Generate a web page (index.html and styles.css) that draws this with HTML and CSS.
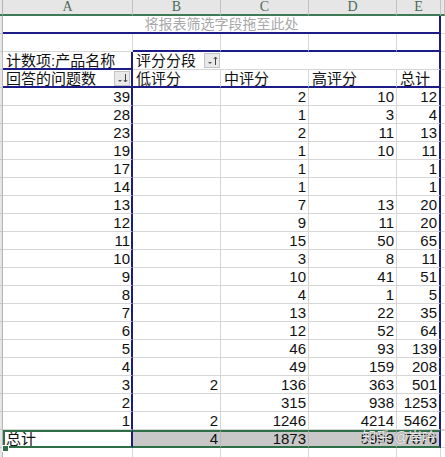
FILE: index.html
```html
<!DOCTYPE html>
<html lang="zh-CN">
<head>
<meta charset="utf-8">
<title>数据透视表</title>
<link rel="stylesheet" href="styles.css">
</head>
<body>
<div class="sheet">
  <div class="row hdr">
    <div class="stub hstub"></div>
    <div class="cell hcell ca">A</div>
    <div class="cell hcell cb">B</div>
    <div class="cell hcell cc">C</div>
    <div class="cell hcell cd">D</div>
    <div class="cell hcell ce">E</div>
    <div class="cell hcell cf"></div>
  </div>

  <div class="row">
    <div class="stub"></div>
    <div class="cell span5 bb br drop">将报表筛选字段拖至此处</div>
    <div class="cell cf"></div>
  </div>

  <div class="row">
    <div class="stub"></div>
    <div class="cell ca"></div>
    <div class="cell cb bb"></div>
    <div class="cell cc bb"></div>
    <div class="cell cd bb"></div>
    <div class="cell ce bb br"></div>
    <div class="cell cf"></div>
  </div>

  <div class="row">
    <div class="stub"></div>
    <div class="cell ca bb br">计数项:产品名称</div>
    <div class="cell cb noright field">
      <span>评分分段</span>
      <span class="pbtn"><svg width="13" height="13" viewBox="0 0 13 13"><path d="M2 8h4l-2 2z" fill="#555"/><path d="M9.5 3v8M7.8 5l1.7-2 1.7 2" stroke="#444" stroke-width="1" fill="none"/></svg></span>
    </div>
    <div class="cell cde br"></div>
    <div class="cell cf"></div>
  </div>

  <div class="row">
    <div class="stub"></div>
    <div class="cell ca bb br field">
      <span>回答的问题数</span>
      <span class="pbtn"><svg width="13" height="13" viewBox="0 0 13 13"><path d="M2 8h4l-2 2z" fill="#555"/><path d="M9.5 2v8M7.8 8l1.7 2 1.7-2" stroke="#444" stroke-width="1" fill="none"/></svg></span>
    </div>
    <div class="cell cb bb">低评分</div>
    <div class="cell cc bb">中评分</div>
    <div class="cell cd bb">高评分</div>
    <div class="cell ce bb br">总计</div>
    <div class="cell cf"></div>
  </div>

  <div class="row"><div class="stub"></div><div class="cell ca br num">39</div><div class="cell cb num"></div><div class="cell cc num">2</div><div class="cell cd num">10</div><div class="cell ce br num">12</div><div class="cell cf"></div></div>
  <div class="row"><div class="stub"></div><div class="cell ca br num">28</div><div class="cell cb num"></div><div class="cell cc num">1</div><div class="cell cd num">3</div><div class="cell ce br num">4</div><div class="cell cf"></div></div>
  <div class="row"><div class="stub"></div><div class="cell ca br num">23</div><div class="cell cb num"></div><div class="cell cc num">2</div><div class="cell cd num">11</div><div class="cell ce br num">13</div><div class="cell cf"></div></div>
  <div class="row"><div class="stub"></div><div class="cell ca br num">19</div><div class="cell cb num"></div><div class="cell cc num">1</div><div class="cell cd num">10</div><div class="cell ce br num">11</div><div class="cell cf"></div></div>
  <div class="row"><div class="stub"></div><div class="cell ca br num">17</div><div class="cell cb num"></div><div class="cell cc num">1</div><div class="cell cd num"></div><div class="cell ce br num">1</div><div class="cell cf"></div></div>
  <div class="row"><div class="stub"></div><div class="cell ca br num">14</div><div class="cell cb num"></div><div class="cell cc num">1</div><div class="cell cd num"></div><div class="cell ce br num">1</div><div class="cell cf"></div></div>
  <div class="row"><div class="stub"></div><div class="cell ca br num">13</div><div class="cell cb num"></div><div class="cell cc num">7</div><div class="cell cd num">13</div><div class="cell ce br num">20</div><div class="cell cf"></div></div>
  <div class="row"><div class="stub"></div><div class="cell ca br num">12</div><div class="cell cb num"></div><div class="cell cc num">9</div><div class="cell cd num">11</div><div class="cell ce br num">20</div><div class="cell cf"></div></div>
  <div class="row"><div class="stub"></div><div class="cell ca br num">11</div><div class="cell cb num"></div><div class="cell cc num">15</div><div class="cell cd num">50</div><div class="cell ce br num">65</div><div class="cell cf"></div></div>
  <div class="row"><div class="stub"></div><div class="cell ca br num">10</div><div class="cell cb num"></div><div class="cell cc num">3</div><div class="cell cd num">8</div><div class="cell ce br num">11</div><div class="cell cf"></div></div>
  <div class="row"><div class="stub"></div><div class="cell ca br num">9</div><div class="cell cb num"></div><div class="cell cc num">10</div><div class="cell cd num">41</div><div class="cell ce br num">51</div><div class="cell cf"></div></div>
  <div class="row"><div class="stub"></div><div class="cell ca br num">8</div><div class="cell cb num"></div><div class="cell cc num">4</div><div class="cell cd num">1</div><div class="cell ce br num">5</div><div class="cell cf"></div></div>
  <div class="row"><div class="stub"></div><div class="cell ca br num">7</div><div class="cell cb num"></div><div class="cell cc num">13</div><div class="cell cd num">22</div><div class="cell ce br num">35</div><div class="cell cf"></div></div>
  <div class="row"><div class="stub"></div><div class="cell ca br num">6</div><div class="cell cb num"></div><div class="cell cc num">12</div><div class="cell cd num">52</div><div class="cell ce br num">64</div><div class="cell cf"></div></div>
  <div class="row"><div class="stub"></div><div class="cell ca br num">5</div><div class="cell cb num"></div><div class="cell cc num">46</div><div class="cell cd num">93</div><div class="cell ce br num">139</div><div class="cell cf"></div></div>
  <div class="row"><div class="stub"></div><div class="cell ca br num">4</div><div class="cell cb num"></div><div class="cell cc num">49</div><div class="cell cd num">159</div><div class="cell ce br num">208</div><div class="cell cf"></div></div>
  <div class="row"><div class="stub"></div><div class="cell ca br num">3</div><div class="cell cb num">2</div><div class="cell cc num">136</div><div class="cell cd num">363</div><div class="cell ce br num">501</div><div class="cell cf"></div></div>
  <div class="row"><div class="stub"></div><div class="cell ca br num">2</div><div class="cell cb num"></div><div class="cell cc num">315</div><div class="cell cd num">938</div><div class="cell ce br num">1253</div><div class="cell cf"></div></div>
  <div class="row"><div class="stub"></div><div class="cell ca br num">1</div><div class="cell cb num">2</div><div class="cell cc num">1246</div><div class="cell cd num">4214</div><div class="cell ce br num">5462</div><div class="cell cf"></div></div>

  <div class="row total">
    <div class="stub"></div>
    <div class="cell ca br tl">总计</div>
    <div class="cell cb num tg">4</div>
    <div class="cell cc num tg">1873</div>
    <div class="cell cd num tg">5999</div>
    <div class="cell ce br num tg">7876</div>
    <div class="cell cf"></div>
  </div>

  <div class="row">
    <div class="stub"></div>
    <div class="cell ca"></div>
    <div class="cell cb"></div>
    <div class="cell cc"></div>
    <div class="cell cd"></div>
    <div class="cell ce"></div>
    <div class="cell cf"></div>
  </div>

  <div class="handle"></div>
  <div class="mark">知乎 @岸吟</div>
</div>
</body>
</html>
```

FILE: styles.css
```css
html, body {
  margin: 0;
  padding: 0;
  background: #ffffff;
}

.sheet {
  position: relative;
  width: 445px;
  height: 457px;
  overflow: hidden;
  font-family: "Liberation Sans", "Noto Sans CJK SC", sans-serif;
  font-size: 15px;
  color: #111;
  display: flex;
  flex-direction: column;
}

.row {
  display: flex;
  height: 18px;
  flex: none;
}

.row.hdr {
  height: 16px;
}

.stub {
  width: 3px;
  flex: none;
  box-sizing: border-box;
  background: #e6e6e6;
  border-right: 1px solid #b4b4b4;
  border-bottom: 1px solid #c8c8c8;
}

.cell {
  box-sizing: border-box;
  flex: none;
  height: 100%;
  border-right: 1px solid #d6d6d6;
  border-bottom: 1px solid #d6d6d6;
  padding: 0 2px 0 3px;
  line-height: 17px;
  white-space: nowrap;
  overflow: hidden;
}

.ca { width: 130px; }
.cb { width: 88px; }
.cc { width: 88px; }
.cd { width: 88px; }
.ce { width: 44px; }
.cde { width: 220px; }
.span5 { width: 438px; }
.cf { flex: 1 1 auto; }

.hcell {
  background: #e6e6e6;
  border-right: 1px solid #c2c2c2;
  border-bottom: 2px solid #3f7a56;
  text-align: center;
  font-family: "Liberation Serif", serif;
  font-size: 14px;
  line-height: 14px;
  color: #4d6b59;
  padding: 0;
}

.hstub {
  border-bottom: 2px solid #3f7a56;
}

.num {
  text-align: right;
  padding-right: 2px;
}

.ca.num {
  padding-right: 1px;
}

.bb {
  border-bottom: 2px solid #1c1c86;
}

.br {
  border-right: 2px solid #1c1c86;
}

.noright {
  border-right: 0;
}

.drop {
  text-align: center;
  color: #a8a8a8;
  font-size: 14px;
  line-height: 16px;
}

.field {
  display: flex;
  align-items: center;
  justify-content: space-between;
  padding-right: 1px;
}

.pbtn {
  box-sizing: border-box;
  width: 16px;
  height: 15px;
  background: #e9e9e9;
  border: 1px solid #c4c4c4;
  display: flex;
  align-items: center;
  justify-content: center;
}

.total .cell {
  border-top: 2px solid #2f6f48;
  border-bottom: 2px solid #2f6f48;
  line-height: 14px;
}

.total .cf {
  border-top: 1px solid #d6d6d6;
  border-bottom: 1px solid #d6d6d6;
}

.tl {
  border-left: 2px solid #2f6f48;
  padding-left: 1px;
}

.tg {
  background: #c8c8c8;
  border-right-color: #b9b9b9;
}

.tg.br {
  border-right-color: #1c1c86;
}

.handle {
  position: absolute;
  left: 2px;
  top: 445px;
  width: 5px;
  height: 5px;
  background: #2f6f48;
  border: 1px solid #ffffff;
}

.mark {
  position: absolute;
  left: 362px;
  top: 430px;
  font-size: 14px;
  line-height: 15px;
  color: rgba(255, 255, 255, 0.85);
  text-shadow: 0 0 1px rgba(90, 90, 90, 0.8);
}
```
